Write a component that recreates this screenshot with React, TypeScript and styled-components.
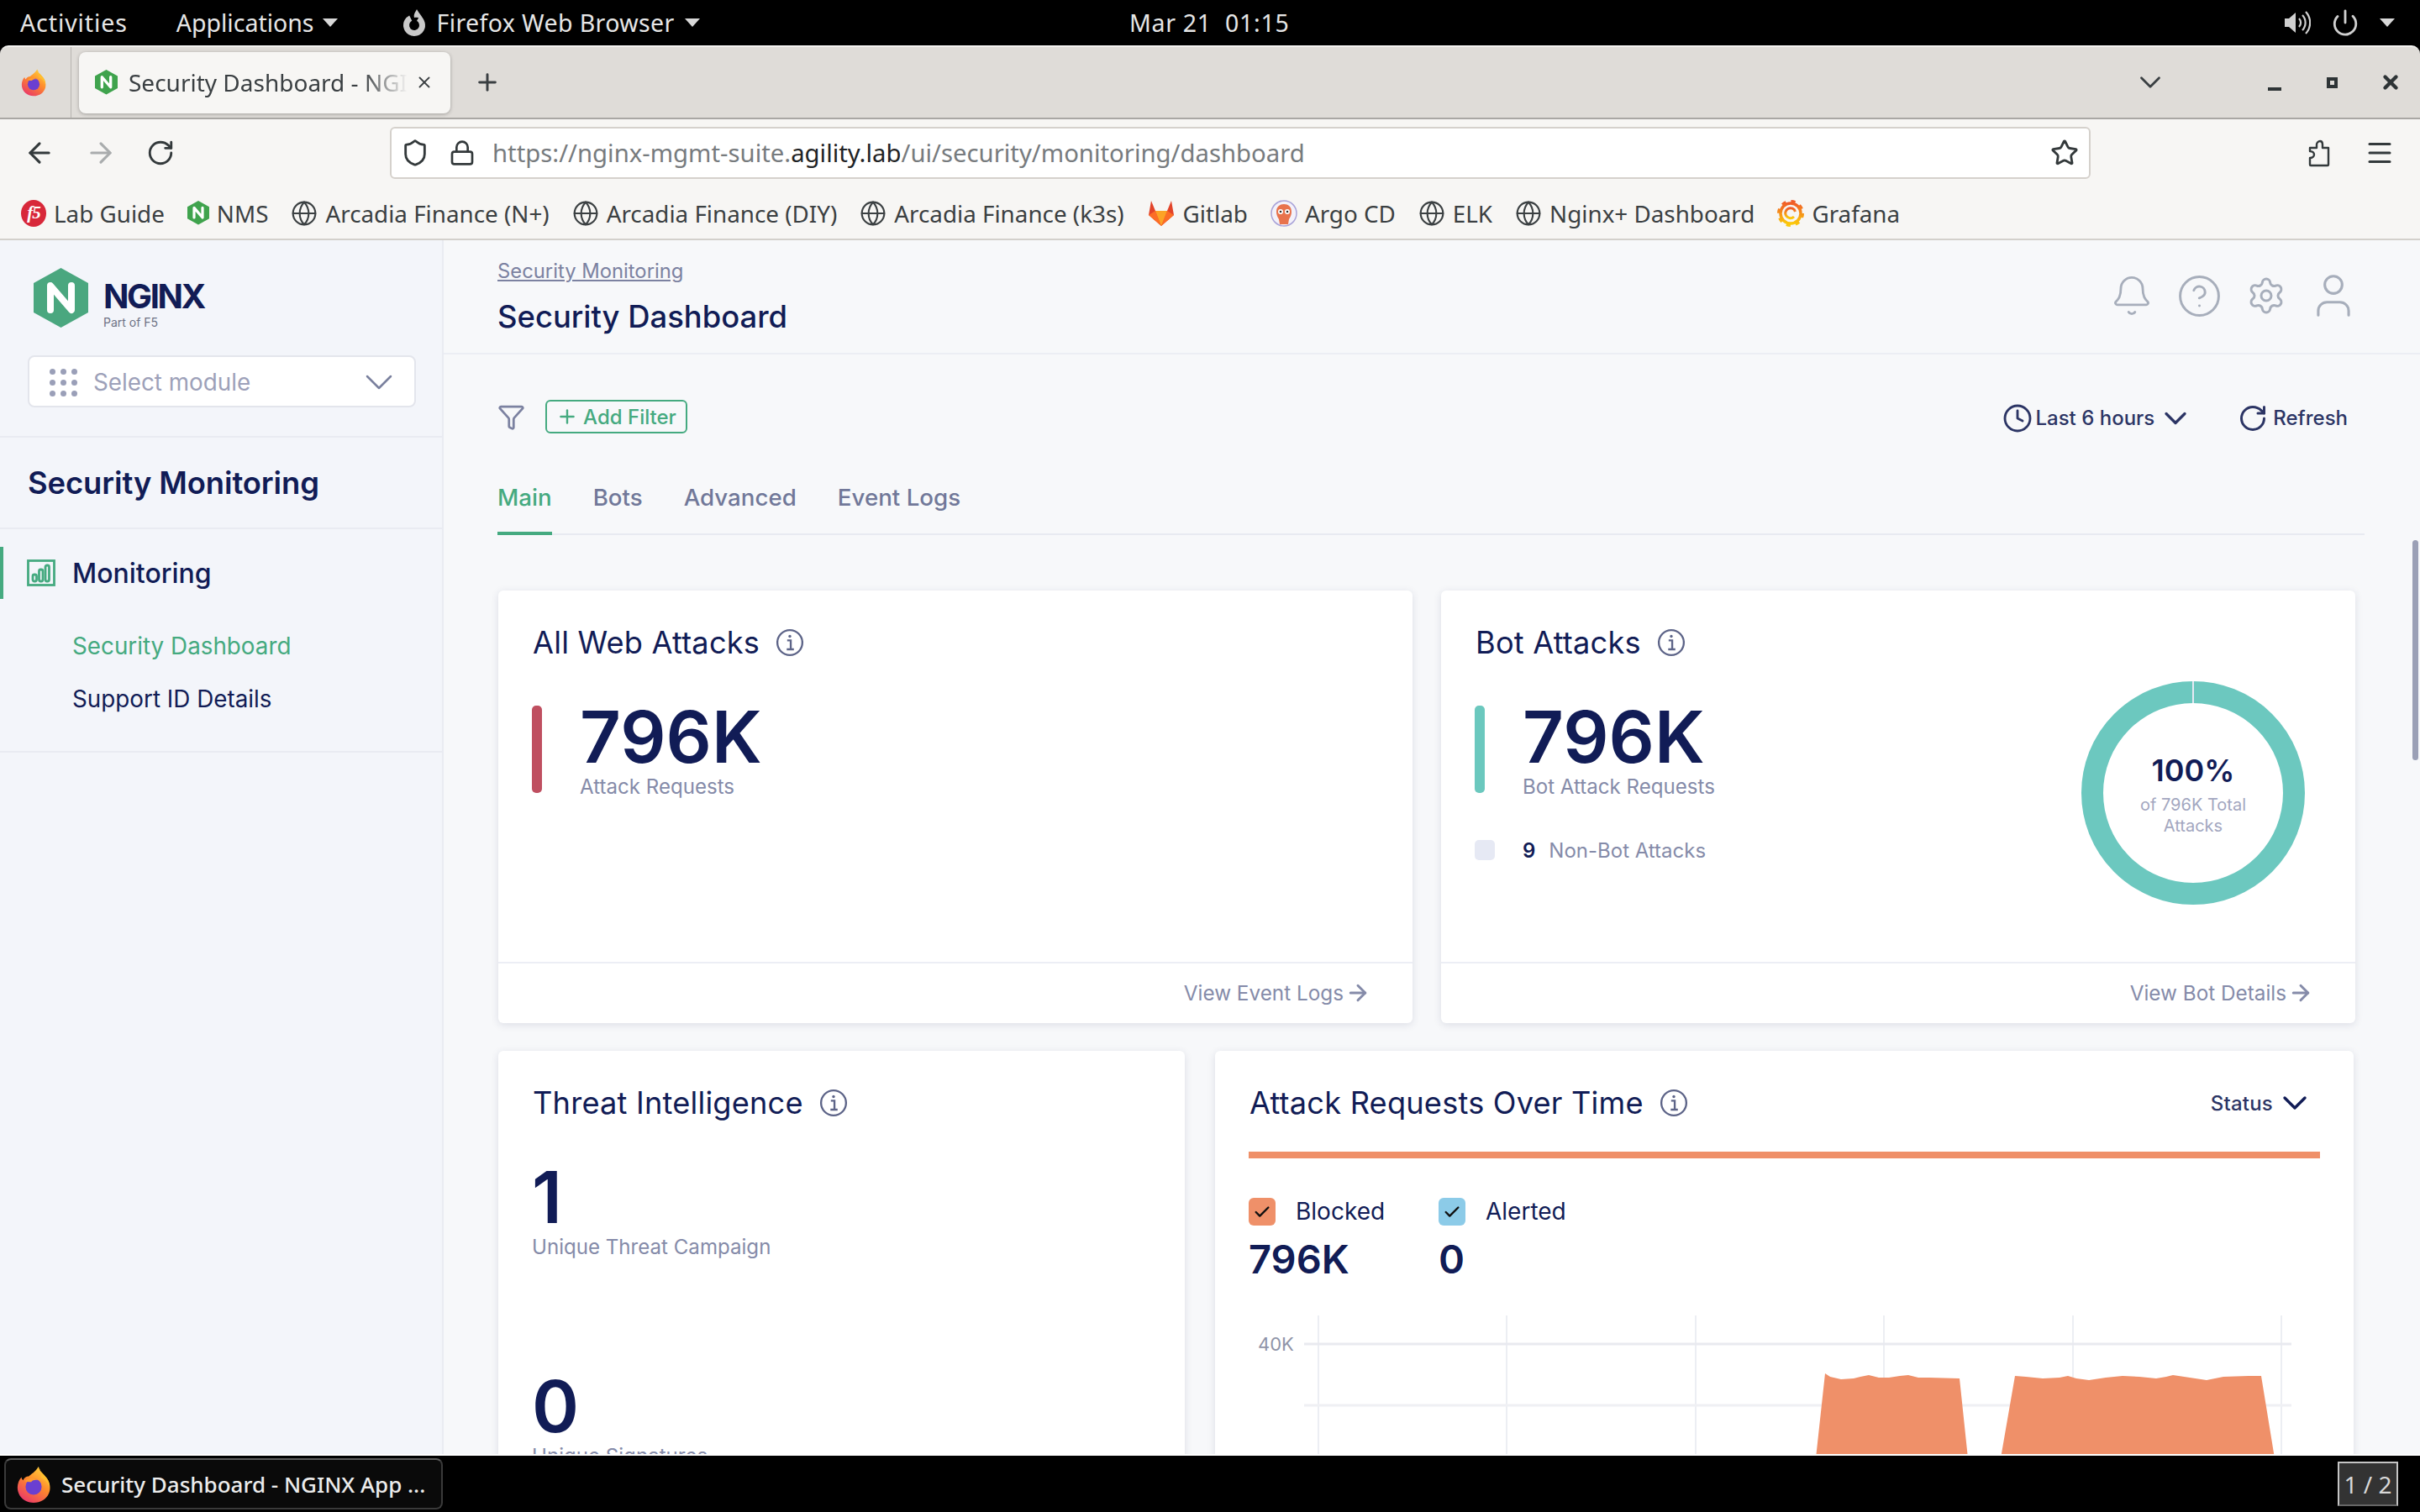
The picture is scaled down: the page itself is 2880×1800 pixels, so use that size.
import React from "react";
import styled, { createGlobalStyle } from "styled-components";
import {
  ArrowLeft, ArrowRight, Bell, ChevronDown, CircleHelp, Clock, Globe, Lock, Menu, Plus,
  RotateCw, Settings, Shield, Star, User, Power, X, Check, Funnel,
} from "lucide-react";

const navy = "#111c56";
const muted = "#858ba9";
const green = "#45aa80";
const desk = `"Noto Sans", sans-serif`;
const web = `Inter, sans-serif`;

const Global = createGlobalStyle`
  html, body { margin: 0; padding: 0; overflow: hidden; background: #000; }
  * { box-sizing: border-box; }
`;

const Screen = styled.div`
  width: 2880px; height: 1800px; display: flex; flex-direction: column; overflow: hidden; background: #000;
`;

/* GNOME top bar */
const TopBar = styled.div`
  height: 54px; flex: none; background: #000; color: #e6e6e6; font: 400 28.5px ${desk};
  display: flex; align-items: center; padding: 0 30px 0 24px; position: relative;
`;
const TopItem = styled.div<{ $left: number; $track?: number; $gap?: number }>`
  display: flex; align-items: center; gap: ${p => p.$gap ?? 10}px; margin-left: ${p => p.$left}px; white-space: nowrap;
  letter-spacing: ${p => p.$track ?? 0}px;
`;
const Caret = styled.span`
  width: 0; height: 0; border-left: 9px solid transparent; border-right: 9px solid transparent;
  border-top: 10px solid #d8d8d8; display: inline-block;
`;
const Clockface = styled.div`
  position: absolute; left: 1344px; top: 0; height: 54px; display: flex; align-items: center; white-space: pre; letter-spacing: .7px;
`;
const TopRight = styled.div`
  margin-left: auto; display: flex; align-items: center; gap: 24px; color: #d0d0d0;
`;

/* Firefox window chrome */
const TabBar = styled.div`
  height: 88px; flex: none; background: #dfdcd8; border-top: 2px solid #f4f3f1; border-bottom: 2px solid #a9a7a4;
  border-radius: 10px 10px 0 0; display: flex; align-items: center; position: relative; color: #2e3436;
`;
const TabBarLogo = styled.div`
  width: 85px; height: 100%; display: flex; align-items: center; justify-content: center;
  border-right: 1px solid #b8b5b1; padding-right: 4px;
`;
const Tab = styled.div`
  margin-left: 9px; width: 442px; height: 73px; background: #f7f6f4; border-radius: 8px;
  box-shadow: 0 1px 4px rgba(0,0,0,.28); display: flex; align-items: center; padding-left: 19px; gap: 13px;
`;
const TabTitle = styled.div`
  width: 332px; overflow: hidden; white-space: nowrap; font: 400 28px ${desk}; color: #3a3f42;
  mask-image: linear-gradient(to right, #000 84%, transparent 100%);
`;
const TabClose = styled.div`
  display: flex; color: #3a3f42; margin-left: -4px;
`;
const NewTab = styled.div`
  display: flex; margin-left: 28px; color: #3a3f42;
`;
const WinControls = styled.div`
  margin-left: auto; display: flex; align-items: center; padding-right: 22px; color: #2e3436;
`;
const TabChevron = styled.div`
  display: flex; margin-right: 119px; color: #3a3f42;
`;
const WinMin = styled.div`
  width: 16px; height: 4px; background: #2e3436; margin-top: 16px; margin-right: 54px;
`;
const WinMax = styled.div`
  width: 13px; height: 13px; border: 4px solid #2e3436; margin-right: 50px;
`;
const WinClose = styled.div`
  display: flex;
`;

const NavBar = styled.div`
  height: 71px; flex: none; background: #f7f6f4; display: flex; align-items: center; color: #33393b; padding-top: 9px;
`;
const NavButtons = styled.div`
  width: 464px; display: flex; align-items: center; padding-left: 28px; gap: 35px; flex: none;
`;
const UrlBox = styled.div`
  width: 2024px; height: 62px; flex: none; background: #fff; border: 2px solid #d5d1cc; border-radius: 6px;
  display: flex; align-items: center; padding: 0 12px 0 11px;
`;
const UrlShield = styled.div`
  display: flex; margin-right: 23px;
`;
const UrlLock = styled.div`
  display: flex; margin-right: 20px;
`;
const UrlText = styled.div`
  font: 400 29.3px ${desk}; color: #777b7e; white-space: nowrap; flex: 1;
`;
const UrlHost = styled.span`
  color: #1f2325;
`;
const NavTail = styled.div`
  display: flex; align-items: center; margin-left: 258px; gap: 40px;
`;

const Bookmarks = styled.div`
  height: 73px; flex: none; background: #f7f6f4; border-bottom: 2px solid #d3d0cb; display: flex; align-items: center;
  padding: 10px 0 0 25px; gap: 27px; font: 400 27.8px ${desk}; color: #3b4042;
`;
const Bookmark = styled.div`
  display: flex; align-items: center; gap: 9px; white-space: nowrap;
`;
const F5Badge = styled.span`
  width: 30px; height: 32px; border-radius: 50%; background: #d8283a; color: #fff; display: flex; align-items: center;
  justify-content: center; font: italic 700 21px "Liberation Serif", serif; letter-spacing: -1px;
`;

/* page */
const Page = styled.div`
  flex: 1; min-height: 0; display: flex; overflow: hidden; background: #f7f8fa; border-bottom: 2px solid #fff;
`;
const Sidebar = styled.aside`
  width: 528px; flex: none; background: #f3f5fa; border-right: 2px solid #e9ebf2; display: flex; flex-direction: column;
`;
const LogoRow = styled.div`
  display: flex; align-items: center; gap: 18px; padding: 33px 0 0 40px; height: 104px;
`;
const LogoWords = styled.div`
  display: flex; flex-direction: column; padding-top: 14px;
`;
const LogoName = styled.div`
  font: 700 40px/44px ${web}; color: ${navy}; letter-spacing: -2.4px;
`;
const LogoSub = styled.div`
  font: 400 14px/16px ${web}; color: #6d7284; margin-top: 1px;
`;
const ModuleSelect = styled.div`
  margin: 33px 31px 34px 33px; height: 62px; background: #fff; border: 2px solid #e3e5ec; border-radius: 8px;
  display: flex; align-items: center; padding: 2px 14px 0 24px; gap: 19px; font: 400 27.8px ${web}; color: #9da1b9;
`;
const DotGrid = styled.div`
  display: grid; grid-template-columns: repeat(3, 7px); gap: 6px;
`;
const Dot = styled.span`
  width: 7px; height: 7px; border-radius: 50%; background: #9a9fb8;
`;
const SelectChevron = styled.div`
  margin-left: auto; display: flex; color: #7a809e;
`;
const SidebarTitle = styled.div`
  height: 111px; flex: none; border-top: 2px solid #e9ebf2; border-bottom: 2px solid #e9ebf2; padding-left: 33px;
  display: flex; align-items: center; font: 600 36.4px ${web}; color: ${navy}; letter-spacing: -.1px;
`;
const NavSection = styled.div`
  padding: 21px 0 31px; border-bottom: 2px solid #e9ebf2;
`;
const NavHead = styled.div`
  height: 62px; margin-bottom: 24px; display: flex; align-items: center; gap: 20px; padding-left: 32px; font: 500 32px ${web}; color: ${navy};
  position: relative;
`;
const NavMark = styled.span`
  position: absolute; left: 0; top: 0; width: 4px; height: 62px; background: ${green};
`;
const SubItem = styled.div<{ $active?: boolean }>`
  height: 63px; display: flex; align-items: center; padding-left: 86px; font: 400 27.8px ${web};
  color: ${p => (p.$active ? green : navy)};
`;

const Main = styled.main`
  flex: 1; min-width: 0; display: flex; flex-direction: column;
`;
const Header = styled.header`
  height: 136px; flex: none; border-bottom: 2px solid #eceef4; padding: 0 63px 0 64px; display: flex; justify-content: space-between;
`;
const HeaderText = styled.div`
  display: flex; flex-direction: column; padding-top: 23px;
`;
const Crumb = styled.a`
  font: 400 23.8px/28px ${web}; color: #7c82a1; text-decoration: underline;
`;
const PageTitle = styled.h1`
  margin: 18px 0 0; font: 500 36.4px/44px ${web}; color: ${navy};
`;
const HeaderIcons = styled.div`
  display: flex; align-items: center; color: #a7aebb; padding-bottom: 2px;
`;
const IconSlot = styled.div`
  width: 80px; display: flex; justify-content: center;
`;
const Content = styled.div`
  padding: 49px 77px 0 64px; display: flex; flex-direction: column;
`;
const FilterRow = styled.div`
  height: 50px; display: flex; align-items: center; margin-bottom: 31px; color: #7c82a1;
`;
const AddFilter = styled.div`
  margin-left: 24px; width: 169px; height: 40px; border: 2px solid ${green}; border-radius: 6px; color: ${green};
  display: flex; align-items: center; justify-content: center; gap: 6px; font: 500 24px ${web};
`;
const FilterRight = styled.div`
  margin-left: auto; margin-right: 9px; padding-top: 3px; display: flex; align-items: center; font: 500 24px ${web}; color: #2c3565;
`;
const RangeBtn = styled.div`
  display: flex; align-items: center; gap: 3px; margin-right: 52px;
`;
const RefreshBtn = styled.div`
  display: flex; align-items: center; gap: 6px;
`;
const Tabs = styled.div`
  height: 85px; margin-right: -11px; display: flex; gap: 49px; border-bottom: 2px solid #e8eaf1; margin-bottom: 66px;
`;
const TabLink = styled.div<{ $active?: boolean }>`
  height: 85px; padding-top: 20px; font: 500 27.7px/40px ${web}; color: ${p => (p.$active ? green : "#717899")};
  border-bottom: ${p => (p.$active ? `4px solid ${green}` : "none")};
`;
const Row = styled.div<{ $cols: string; $gap: number }>`
  display: grid; grid-template-columns: ${p => p.$cols}; gap: ${p => p.$gap}px; margin: 0 0 33px 1px;
`;
const Card = styled.section<{ $height?: number }>`
  background: #fff; border-radius: 6px; box-shadow: 0 2px 10px rgba(40,50,90,.13); display: flex; flex-direction: column;
  ${p => (p.$height ? `height: ${p.$height}px;` : "")} position: relative;
`;
const CardHead = styled.div`
  height: 84px; flex: none; padding: 40px 40px 0 41px; display: flex; align-items: center; gap: 19px;
  font: 400 36.2px/44px ${web}; color: ${navy}; letter-spacing: .2px;
`;
const HeadRight = styled.div`
  margin-left: auto; display: flex; align-items: center; gap: 2px; font: 500 24px ${web}; color: #2c3565; padding-right: 6px;
`;
const CardBody = styled.div`
  flex: 1; display: flex; justify-content: space-between; padding: 53px 60px 0 40px;
`;
const StatRow = styled.div`
  display: flex; gap: 45px;
`;
const Bar = styled.span<{ $color: string }>`
  width: 12px; height: 104px; border-radius: 5px; background: ${p => p.$color};
`;
const Stat = styled.div<{ $mt?: number }>`
  display: flex; flex-direction: column; margin-top: ${p => p.$mt ?? 0}px;
`;
const BigValue = styled.div`
  font: 600 85px/76px ${web}; color: ${navy};
`;
const StatLabel = styled.div`
  margin-top: 6px; font: 400 24.1px/30px ${web}; color: ${muted};
`;
const MinorRow = styled.div`
  margin-top: 48px; height: 24px; display: flex; align-items: center; font: 400 24px ${web}; color: ${muted};
`;
const MinorSwatch = styled.span`
  width: 24px; height: 24px; border-radius: 5px; background: #e6e9f4; margin-right: 33px;
`;
const MinorValue = styled.b`
  font-weight: 600; color: ${navy}; margin-right: 16px;
`;
const Donut = styled.div`
  width: 266px; height: 266px; position: relative; margin-top: -29px; flex: none;
`;
const DonutCenter = styled.div`
  position: absolute; left: 55px; right: 55px; top: 86px; text-align: center;
`;
const DonutValue = styled.div`
  font: 600 36px/40px ${web}; color: ${navy};
`;
const DonutLabel = styled.div`
  margin-top: 9px; font: 400 20px/25px ${web}; color: #a3a7c0;
`;
const CardFoot = styled.div`
  height: 73px; flex: none; border-top: 2px solid #eceef5; display: flex; align-items: center; justify-content: flex-end;
  padding: 0 50px 2px 0; gap: 2px; font: 400 24.3px ${web}; color: ${muted};
`;
const ThreatBody = styled.div`
  padding: 53px 40px 0 40px; display: flex; flex-direction: column;
`;
const OrangeRule = styled.div`
  margin: 36px 40px 0; height: 8px; background: #ef9069; flex: none;
`;
const Legend = styled.div`
  margin: 47px 40px 0; display: flex;
`;
const LegendCol = styled.div`
  width: 226px; display: flex; flex-direction: column;
`;
const LegendHead = styled.div`
  display: flex; align-items: center; gap: 24px; font: 400 28px/33px ${web}; color: ${navy};
`;
const Tick = styled.span<{ $color: string }>`
  width: 32px; height: 33px; border-radius: 6px; background: ${p => p.$color}; color: #101010;
  display: flex; align-items: center; justify-content: center;
`;
const LegendValue = styled.div`
  margin-top: 15px; font: 600 47px/50px ${web}; color: ${navy};
`;
const ChartWrap = styled.div`
  margin: 42px 40px 0; position: relative; height: 240px;
`;
const AxisLabel = styled.span`
  position: absolute; left: 11px; top: 22px; font: 400 22px/24px ${web}; color: #8f94a8;
`;

const Taskbar = styled.div`
  height: 67px; flex: none; background: #000; display: flex; align-items: center; padding: 0 26px 0 5px; justify-content: space-between;
`;
const TaskButton = styled.div`
  width: 522px; height: 61px; border-radius: 8px; background: #0a0a0a; border: 2px solid #3a3a3a; border-top-color: #5c5c5c;
  display: flex; align-items: center; gap: 10px; padding-left: 10px; color: #ececec; font: 500 26px ${desk}; white-space: nowrap;
`;
const Pager = styled.div`
  width: 72px; height: 53px; background: #333; border: 2px solid #c4c4c4; color: #d8d8d8; white-space: nowrap;
  display: flex; align-items: center; justify-content: center; font: 400 28px ${desk}; border-bottom-color: #666;
`;
const ScrollThumb = styled.div`
  position: absolute; right: 2px; top: 643px; width: 7px; height: 262px; background: #9ba0b6; border-radius: 4px; z-index: 3;
`;

const Firefox = ({ size }: { size: number }) => (
  <svg width={size} height={size} viewBox="0 0 48 48">
    <defs>
      <linearGradient id="ffa" x1="0.8" y1="0" x2="0.2" y2="1">
        <stop offset="0" stopColor="#ffd53d" /><stop offset=".45" stopColor="#ff8a2b" /><stop offset="1" stopColor="#e8336d" />
      </linearGradient>
    </defs>
    <path fill="url(#ffa)" d="M30 2c1 6 6 8 10 14 4 5 5 11 4 16-2 9-10 15-20 15C13 47 4 39 4 28c0-5 2-10 5-13 0 2 1 3 2 4 1-3 4-5 7-5 3-3 8-5 12-12z" />
    <path fill="#ffbd2e" d="M30 2c1 6 6 8 10 14 3 4 4 8 4 12-2-6-6-10-11-12 1-5 0-9-3-14z" />
    <circle cx="24" cy="27" r="10" fill="#6a3fd1" />
    <path fill="#ff9a2e" d="M13 20c4-4 12-5 17-1-4-1-7 0-9 2-3 0-6 0-8-1z" />
  </svg>
);

const Hex = ({ size, fill }: { size: number; fill: string }) => (
  <svg width={size} height={(size * 71) / 65} viewBox="0 0 65 71">
    <path fill={fill} d="M32.5 0 65 18v35L32.5 71 0 53V18z" />
    <path fill="none" stroke="#fff" strokeWidth="8" strokeLinejoin="round" strokeLinecap="round" d="M20 50V21l25 29V21" />
  </svg>
);

const InfoIcon = () => (
  <svg width="34" height="34" viewBox="0 0 32 32" fill="none" stroke="#5d6488" strokeWidth="2.2">
    <circle cx="16" cy="16" r="14" />
    <path d="M13 13.5h4V23M12.5 23.5h8" />
    <circle cx="16" cy="9" r="1.6" fill="#5d6488" stroke="none" />
  </svg>
);

const Gitlab = () => (
  <svg width="34" height="34" viewBox="0 0 34 34">
    <path fill="#e24329" d="M17 32 2 19 5 2l5 12h14l5-12 3 17z" />
    <path fill="#fc6d26" d="M17 32 2 19l8-5zM17 32l15-13-8-5z" />
    <path fill="#fca326" d="M17 32 10 14h14z" />
  </svg>
);
const Argo = () => (
  <svg width="32" height="34" viewBox="0 0 32 34">
    <circle cx="16" cy="17" r="15" fill="#f3f1fa" stroke="#a9a3d8" strokeWidth="1.5" />
    <path fill="#e8734d" d="M7 15c0-6 4-9 9-9s9 3 9 9c0 5-2 7-3 9l-1 6H11l-1-6c-1-2-3-4-3-9z" />
    <circle cx="12" cy="15" r="3" fill="#fff" /><circle cx="20" cy="15" r="3" fill="#fff" />
    <circle cx="12" cy="15" r="1.3" fill="#333" /><circle cx="20" cy="15" r="1.3" fill="#333" />
  </svg>
);
const Grafana = () => (
  <svg width="32" height="34" viewBox="0 0 32 34" fill="none">
    <defs>
      <linearGradient id="gra" x1="0" y1="0" x2="0" y2="1"><stop offset="0" stopColor="#f05a28" /><stop offset="1" stopColor="#fbca0a" /></linearGradient>
    </defs>
    <circle cx="16" cy="17" r="12" stroke="url(#gra)" strokeWidth="3.5" />
    <circle cx="16" cy="17" r="14" stroke="url(#gra)" strokeWidth="4" strokeDasharray="5 6" />
    <path d="M21.5 15a6 6 0 1 0-1.5 6" stroke="url(#gra)" strokeWidth="3" />
  </svg>
);
const FoxMono = () => (
  <svg width="30" height="34" viewBox="0 0 30 34" fill="none">
    <circle cx="15" cy="20" r="9.5" stroke="#c9c9c9" strokeWidth="7" strokeDasharray="50 10" transform="rotate(-60 15 20)" />
    <path fill="#c9c9c9" d="M18 1c-2 4-4 6-3 10 5-1 9 1 11 5 0-6-5-9-8-15z" />
  </svg>
);
const ChartBars = () => (
  <svg width="34" height="32" viewBox="0 0 34 32" fill="none" stroke={green} strokeWidth="2.8">
    <rect x="1.5" y="1.5" width="31" height="29" />
    <rect x="7" y="18" width="4.5" height="8" rx="2" /><rect x="14.5" y="12" width="4.5" height="14" rx="2" /><rect x="22" y="7" width="4.5" height="19" rx="2" />
  </svg>
);
const Speaker = () => (
  <svg width="32" height="30" viewBox="0 0 32 30" fill="none" stroke="#d0d0d0" strokeWidth="2.2">
    <path fill="#d0d0d0" stroke="none" d="M1 10h5l8-7v24l-8-7H1z" />
    <path d="M18 10a7 7 0 0 1 0 10M22 6a13 13 0 0 1 0 18M26 2a19 19 0 0 1 0 26" />
  </svg>
);
const Extension = () => (
  <svg width="28" height="33" viewBox="0 0 28 33" fill="none" stroke="#33393b" strokeWidth="2.4" strokeLinejoin="round">
    <path d="M15 2c2 0 3 2 3 4v4h7v20c0 1-1 1-1 1H4c-1 0-1-1-1-1v-8c3 0 5-2 5-4s-2-4-5-4v-4h8V6c0-2 2-4 4-4z" />
  </svg>
);

const bookmarks: [React.ReactNode, string][] = [
  [<F5Badge key="f">f5</F5Badge>, "Lab Guide"],
  [<Hex key="n" size={26} fill="#3fa34d" />, "NMS"],
  [<Globe key="g1" size={32} strokeWidth={1.6} />, "Arcadia Finance (N+)"],
  [<Globe key="g2" size={32} strokeWidth={1.6} />, "Arcadia Finance (DIY)"],
  [<Globe key="g3" size={32} strokeWidth={1.6} />, "Arcadia Finance (k3s)"],
  [<Gitlab key="gl" />, "Gitlab"],
  [<Argo key="ar" />, "Argo CD"],
  [<Globe key="g4" size={32} strokeWidth={1.6} />, "ELK"],
  [<Globe key="g5" size={32} strokeWidth={1.6} />, "Nginx+ Dashboard"],
  [<Grafana key="gr" />, "Grafana"],
];

const area1 = "M675 170 L686 69 L692 73 L705 76 L720 75 L728 73 L738 71 L750 74 L762 74 L775 72 L785 71 L797 74 L810 74 L846 75 L856 170 Z";
const area2 = "M895 170 L912 72 L925 73 L945 75 L965 74 L975 72 L985 75 L1000 77 L1020 74 L1040 72 L1060 73 L1080 75 L1092 73 L1100 71 L1120 74 L1140 77 L1160 73 L1190 72 L1205 72 L1221 170 Z";
const gridX = [83, 307, 532, 756, 981, 1229];

export default function App() {
  return (
    <Screen>
      <Global />
      <TopBar>
        <TopItem $left={0} $track={.9}>Activities</TopItem>
        <TopItem $left={58}>Applications <Caret /></TopItem>
        <TopItem $left={76} $track={.4} $gap={12}><FoxMono /> Firefox Web Browser <Caret /></TopItem>
        <Clockface>Mar 21  01:15</Clockface>
        <TopRight>
          <Speaker />
          <Power size={34} strokeWidth={2} />
          <Caret />
        </TopRight>
      </TopBar>
      <TabBar>
        <TabBarLogo><Firefox size={34} /></TabBarLogo>
        <Tab>
          <Hex size={27} fill="#3fa34d" />
          <TabTitle>Security Dashboard - NGINX App Protect</TabTitle>
          <TabClose><X size={22} strokeWidth={2} /></TabClose>
        </Tab>
        <NewTab><Plus size={32} strokeWidth={2.2} /></NewTab>
        <WinControls>
          <TabChevron><ChevronDown size={42} strokeWidth={1.6} /></TabChevron>
          <WinMin />
          <WinMax />
          <WinClose><X size={26} strokeWidth={4} /></WinClose>
        </WinControls>
      </TabBar>
      <NavBar>
        <NavButtons>
          <ArrowLeft size={38} strokeWidth={2} />
          <ArrowRight size={38} strokeWidth={2} color="#a9acad" />
          <RotateCw size={34} strokeWidth={2} />
        </NavButtons>
        <UrlBox>
          <UrlShield><Shield size={34} strokeWidth={2} /></UrlShield>
          <UrlLock><Lock size={32} strokeWidth={2} /></UrlLock>
          <UrlText>https://nginx-mgmt-suite.<UrlHost>agility.lab</UrlHost>/ui/security/monitoring/dashboard</UrlText>
          <Star size={34} strokeWidth={2} />
        </UrlBox>
        <NavTail>
          <Extension />
          <Menu size={36} strokeWidth={2} />
        </NavTail>
      </NavBar>
      <Bookmarks>
        {bookmarks.map(([icon, label]) => (
          <Bookmark key={label}>{icon}{label}</Bookmark>
        ))}
      </Bookmarks>
      <Page>
        <Sidebar>
          <LogoRow>
            <Hex size={65} fill="#4aa77f" />
            <LogoWords>
              <LogoName>NGINX</LogoName>
              <LogoSub>Part of F5</LogoSub>
            </LogoWords>
          </LogoRow>
          <ModuleSelect>
            <DotGrid>{Array.from({ length: 9 }, (_, i) => <Dot key={i} />)}</DotGrid>
            Select module
            <SelectChevron><ChevronDown size={56} strokeWidth={1.1} /></SelectChevron>
          </ModuleSelect>
          <SidebarTitle>Security Monitoring</SidebarTitle>
          <NavSection>
            <NavHead><NavMark /><ChartBars />Monitoring</NavHead>
            <SubItem $active>Security Dashboard</SubItem>
            <SubItem>Support ID Details</SubItem>
          </NavSection>
        </Sidebar>
        <Main>
          <Header>
            <HeaderText>
              <Crumb>Security Monitoring</Crumb>
              <PageTitle>Security Dashboard</PageTitle>
            </HeaderText>
            <HeaderIcons>
              <IconSlot><Bell size={52} strokeWidth={1.3} /></IconSlot>
              <IconSlot><CircleHelp size={55} strokeWidth={1.3} /></IconSlot>
              <IconSlot><Settings size={48} strokeWidth={1.5} /></IconSlot>
              <IconSlot><User size={62} strokeWidth={1.2} /></IconSlot>
            </HeaderIcons>
          </Header>
          <Content>
            <FilterRow>
              <Funnel size={33} strokeWidth={2} />
              <AddFilter><Plus size={26} strokeWidth={2.2} />Add Filter</AddFilter>
              <FilterRight>
                <RangeBtn><Clock size={36} strokeWidth={1.9} />Last 6 hours<ChevronDown size={44} strokeWidth={1.8} /></RangeBtn>
                <RefreshBtn><RotateCw size={36} strokeWidth={2} />Refresh</RefreshBtn>
              </FilterRight>
            </FilterRow>
            <Tabs>
              <TabLink $active>Main</TabLink>
              <TabLink>Bots</TabLink>
              <TabLink>Advanced</TabLink>
              <TabLink>Event Logs</TabLink>
            </Tabs>
            <Row $cols="1088px 1088px" $gap={34}>
              <Card $height={515}>
                <CardHead>All Web Attacks <InfoIcon /></CardHead>
                <CardBody>
                  <StatRow>
                    <Bar $color="#bf4f60" />
                    <Stat>
                      <BigValue>796K</BigValue>
                      <StatLabel>Attack Requests</StatLabel>
                    </Stat>
                  </StatRow>
                </CardBody>
                <CardFoot>View Event Logs <ArrowRight size={30} strokeWidth={2.4} /></CardFoot>
              </Card>
              <Card $height={515}>
                <CardHead>Bot Attacks <InfoIcon /></CardHead>
                <CardBody>
                  <div>
                    <StatRow>
                      <Bar $color="#6bc8be" />
                      <Stat>
                        <BigValue>796K</BigValue>
                        <StatLabel>Bot Attack Requests</StatLabel>
                      </Stat>
                    </StatRow>
                    <MinorRow><MinorSwatch /><MinorValue>9</MinorValue>Non-Bot Attacks</MinorRow>
                  </div>
                  <Donut>
                    <svg width="266" height="266" viewBox="0 0 266 266">
                      <circle cx="133" cy="133" r="120" fill="none" stroke="#6cc8bf" strokeWidth="26" />
                      <rect x="132" y="0" width="2" height="26" fill="#e6e9f4" />
                    </svg>
                    <DonutCenter>
                      <DonutValue>100%</DonutValue>
                      <DonutLabel>of 796K Total Attacks</DonutLabel>
                    </DonutCenter>
                  </Donut>
                </CardBody>
                <CardFoot>View Bot Details <ArrowRight size={30} strokeWidth={2.4} /></CardFoot>
              </Card>
            </Row>
            <Row $cols="817px 1355px" $gap={36}>
              <Card>
                <CardHead>Threat Intelligence <InfoIcon /></CardHead>
                <ThreatBody>
                  <Stat>
                    <BigValue>1</BigValue>
                    <StatLabel>Unique Threat Campaign</StatLabel>
                  </Stat>
                  <Stat $mt={137}>
                    <BigValue>0</BigValue>
                    <StatLabel>Unique Signatures</StatLabel>
                  </Stat>
                </ThreatBody>
              </Card>
              <Card>
                <CardHead>
                  Attack Requests Over Time <InfoIcon />
                  <HeadRight>Status <ChevronDown size={48} strokeWidth={1.7} color={navy} /></HeadRight>
                </CardHead>
                <OrangeRule />
                <Legend>
                  <LegendCol>
                    <LegendHead><Tick $color="#ef9069"><Check size={22} strokeWidth={2.6} /></Tick>Blocked</LegendHead>
                    <LegendValue>796K</LegendValue>
                  </LegendCol>
                  <LegendCol>
                    <LegendHead><Tick $color="#8ccbe8"><Check size={22} strokeWidth={2.6} /></Tick>Alerted</LegendHead>
                    <LegendValue>0</LegendValue>
                  </LegendCol>
                </Legend>
                <ChartWrap>
                  <svg width="1275" height="240" viewBox="0 0 1275 240">
                    {gridX.map(x => <line key={x} x1={x} x2={x} y1="0" y2="240" stroke="#eceef3" strokeWidth="2" />)}
                    <line x1="66" x2="1241" y1="34" y2="34" stroke="#e9eaf0" strokeWidth="3" />
                    <line x1="66" x2="1241" y1="107" y2="107" stroke="#eff0f4" strokeWidth="3" />
                    <path d={area1} fill="#ef9069" />
                    <path d={area2} fill="#ef9069" />
                  </svg>
                  <AxisLabel>40K</AxisLabel>
                </ChartWrap>
              </Card>
            </Row>
          </Content>
        </Main>
      </Page>
      <Taskbar>
        <TaskButton><Firefox size={46} />Security Dashboard - NGINX App ...</TaskButton>
        <Pager>1 / 2</Pager>
      </Taskbar>
      <ScrollThumb />
    </Screen>
  );
}
